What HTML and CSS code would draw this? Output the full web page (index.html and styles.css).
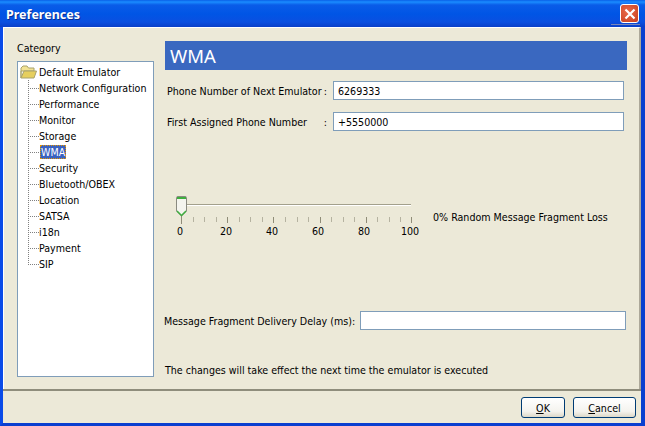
FILE: index.html
```html
<!DOCTYPE html>
<html lang="en">
  <head>
    <meta charset="UTF-8" />
    <link rel="stylesheet" href="styles.css">
    <title>Preferences</title>
  </head>
  <body>
    <div class="window">
      <div class="titlebar">
        <span class="title">Preferences</span>
        <button class="close">
          <svg width="12" height="12" viewBox="0 0 12 12">
            <path d="M1.5 1.5L10.5 10.5M10.5 1.5L1.5 10.5" stroke="#fff" stroke-width="2.2" />
          </svg>
        </button>
      </div>

      <div class="main">
        <div class="side">
          <div class="side_label">Category</div>
          <div class="tree">
            <div class="root">
              <svg class="folder" width="17" height="14" viewBox="0 0 17 14">
                <path d="M1 13V3L3 1H7L8.500 3H14V6H1Z" fill="#f2e394" stroke="#a8a26c" />
                <path d="M1 13L4 6H16.500L14 13Z" fill="#e6cf5e" stroke="#a8a26c" />
              </svg>
              <span>Default Emulator</span>
            </div>
            <ul class="items">
              <li><span>Network Configuration</span></li>
              <li><span>Performance</span></li>
              <li><span>Monitor</span></li>
              <li><span>Storage</span></li>
              <li><span class="selected">WMA</span></li>
              <li><span>Security</span></li>
              <li><span>Bluetooth/OBEX</span></li>
              <li><span>Location</span></li>
              <li><span>SATSA</span></li>
              <li><span>i18n</span></li>
              <li><span>Payment</span></li>
              <li><span>SIP</span></li>
            </ul>
          </div>
        </div>

        <div class="panel">
          <div class="heading">WMA</div>

          <div class="row first">
            <label class="row_label"><span>Phone Number of Next Emulator</span><span>:</span></label>
            <input type="text" class="field" value="6269333" />
          </div>
          <div class="row second">
            <label class="row_label"><span>First Assigned Phone Number</span><span>:</span></label>
            <input type="text" class="field" value="+5550000" />
          </div>

          <div class="slider_row">
            <div class="slider">
              <svg class="track" width="250" height="29" viewBox="0 0 250 29">
                <rect x="15" y="8" width="226" height="1" fill="#a3a08c" />
                <rect x="15" y="9" width="226" height="1" fill="#fff" />
                <path d="M11.500 20v8M57.500 21v6M103.500 21v6M150.500 21v6M196.500 21v6M241.500 21v6" stroke="#8f8c78" />
                <path d="M23.500 21v5M34.500 21v5M46.500 21v5M69.500 21v5M80.500 21v5M92.500 21v5M115.500 21v5M127.500 21v5M138.500 21v5M161.500 21v5M173.500 21v5M184.500 21v5M207.500 21v5M219.500 21v5M230.500 21v5" stroke="#b5b2a0" />
                <path d="M6.500 1.500Q6.500 0.500 8 0.500H15Q16.500 0.500 16.500 1.500V15L11.500 20L6.500 15Z" fill="#f4f4ee" stroke="#8a8a80" />
                <path d="M7 1H16V3H7Z" fill="#3fae3f" />
                <path d="M7 15L11.500 19.500L16 15" fill="none" stroke="#3fae3f" stroke-width="1.500" />
              </svg>
              <div class="scale">
                <span>0</span><span>20</span><span>40</span><span>60</span><span>80</span><span>100</span>
              </div>
            </div>
            <div class="loss">0% Random Message Fragment Loss</div>
          </div>

          <div class="delay">
            <label class="delay_label">Message Fragment Delivery Delay (ms):</label>
            <input type="text" class="field delay_field" />
          </div>

          <div class="note">The changes will take effect the next time the emulator is executed</div>
        </div>
      </div>

      <div class="footer">
        <button class="btn ok"><u>O</u>K</button>
        <button class="btn cancel"><u>C</u>ancel</button>
      </div>
    </div>
  </body>
</html>
```

FILE: styles.css
```css
* {
  padding: 0;
  margin: 0;
  box-sizing: border-box;
}

body {
  width: 645px;
  height: 426px;
  overflow: hidden;
  background: #0a3fd0;
  font-family: "DejaVu Sans Condensed", "DejaVu Sans", sans-serif;
  font-stretch: condensed;
  font-size: 10.6px;
  color: #000;
  white-space: nowrap;
}

.window {
  width: 100%;
  height: 100%;
  display: flex;
  flex-direction: column;
  border-left: 3px solid #0a4be8;
  border-right: 4px solid #0a3fd0;
  border-bottom: 3px solid #0a3fd0;
}

.titlebar {
  flex: none;
  height: 27px;
  margin: 0 -4px 0 -3px;
  padding: 2px 6px 0 6px;
  display: flex;
  align-items: center;
  justify-content: space-between;
  background:
    linear-gradient(#7a86b8, #7a86b8) right 5px top 24px / 29px 1px no-repeat,
    linear-gradient(#0a60e8 0, #1a8cff 2px, #0a5ce8 5px, #0055e5 14px, #0a4fe0 22px, #0a3fc8 27px);
}

.title {
  color: white;
  font-family: "Noto Sans", sans-serif;
  font-size: 12.5px;
  font-weight: bold;
  text-shadow: 1px 1px 0 #0a2f90;
}

.close {
  width: 19px;
  height: 19px;
  margin-top: -2px;
  display: grid;
  place-items: center;
  border: 1px solid #fff;
  border-radius: 3px;
  background: radial-gradient(circle at 40% 40%, #e8694a, #c9401e);
}

.main {
  flex: 1;
  min-height: 0;
  display: flex;
  gap: 11px;
  padding: 13px 12px 12px 13px;
  background: #ece9d8;
  border-top: 1px solid #fff;
  border-left: 1px solid #fff;
  border-right: 2px solid #aca899;
}

.side {
  width: 137px;
  display: flex;
  flex-direction: column;
}

.side_label {
  height: 20px;
  line-height: 14px;
}

.tree {
  flex: 1;
  padding: 2px 0 0 2px;
  background: white;
  border: 1px solid #7f9db9;
}

.root {
  height: 16px;
  display: flex;
  align-items: center;
  gap: 2px;
}

.items {
  list-style: none;
  margin-left: 8px;
}

.items li {
  height: 16px;
  display: flex;
  align-items: center;
  background: repeating-linear-gradient(#808080 0 1px, transparent 1px 2px) left top / 1px 100% no-repeat;
}

.items li:last-child {
  background-size: 1px 50%;
}

.items li::before {
  content: "";
  width: 11px;
  border-top: 1px dotted #808080;
}

.selected {
  margin-left: 1px;
  padding: 1px 1px;
  background: #3a62c0;
  color: white;
  outline: 1px dotted #e49400;
  outline-offset: -1px;
}

.panel {
  flex: 1;
  display: flex;
  flex-direction: column;
}

.heading {
  flex: none;
  height: 29px;
  padding-left: 5px;
  background: #3a68c0;
  color: white;
  font-family: "Noto Sans", sans-serif;
  font-size: 18.5px;
  line-height: 30px;
}

.row {
  display: flex;
  align-items: center;
  padding-left: 2px;
}

.row.first {
  margin-top: 11px;
}

.row.second {
  margin-top: 12px;
}

.row_label {
  width: 166px;
  padding-right: 6px;
  display: flex;
  justify-content: space-between;
}

.field {
  width: 291px;
  height: 19px;
  padding: 0 4px;
  border: 1px solid #7f9db9;
  background: white;
  font-family: inherit;
  font-stretch: condensed;
  font-size: 10.6px;
  color: #000;
}

.slider_row {
  margin-top: 65px;
  margin-left: 5px;
  display: flex;
  gap: 13px;
  align-items: flex-start;
}

.track {
  display: block;
}

.scale {
  width: 250px;
  display: flex;
  justify-content: space-between;
}

.scale span {
  width: 20px;
  text-align: center;
}

.loss {
  margin-top: 15px;
}

.delay {
  margin-top: 74px;
  margin-left: -1px;
  display: flex;
  align-items: center;
}

.delay_label {
  width: 196px;
}

.delay_field {
  width: 266px;
}

.note {
  margin-top: 34px;
}

.footer {
  flex: none;
  height: 34px;
  display: flex;
  justify-content: flex-end;
  align-items: flex-start;
  gap: 8px;
  padding: 6px 5px 0 0;
  background: #ece9d8;
  border-top: 2px solid #8f8d7c;
}

.btn {
  height: 21px;
  border: 1px solid #003c74;
  border-radius: 3px;
  background: linear-gradient(#fff, #f4f3ee 70%, #dcd8c8);
  font-family: inherit;
  font-stretch: condensed;
  font-size: 10.6px;
  color: #000;
}

.ok {
  width: 44px;
}

.cancel {
  width: 63px;
}
```
